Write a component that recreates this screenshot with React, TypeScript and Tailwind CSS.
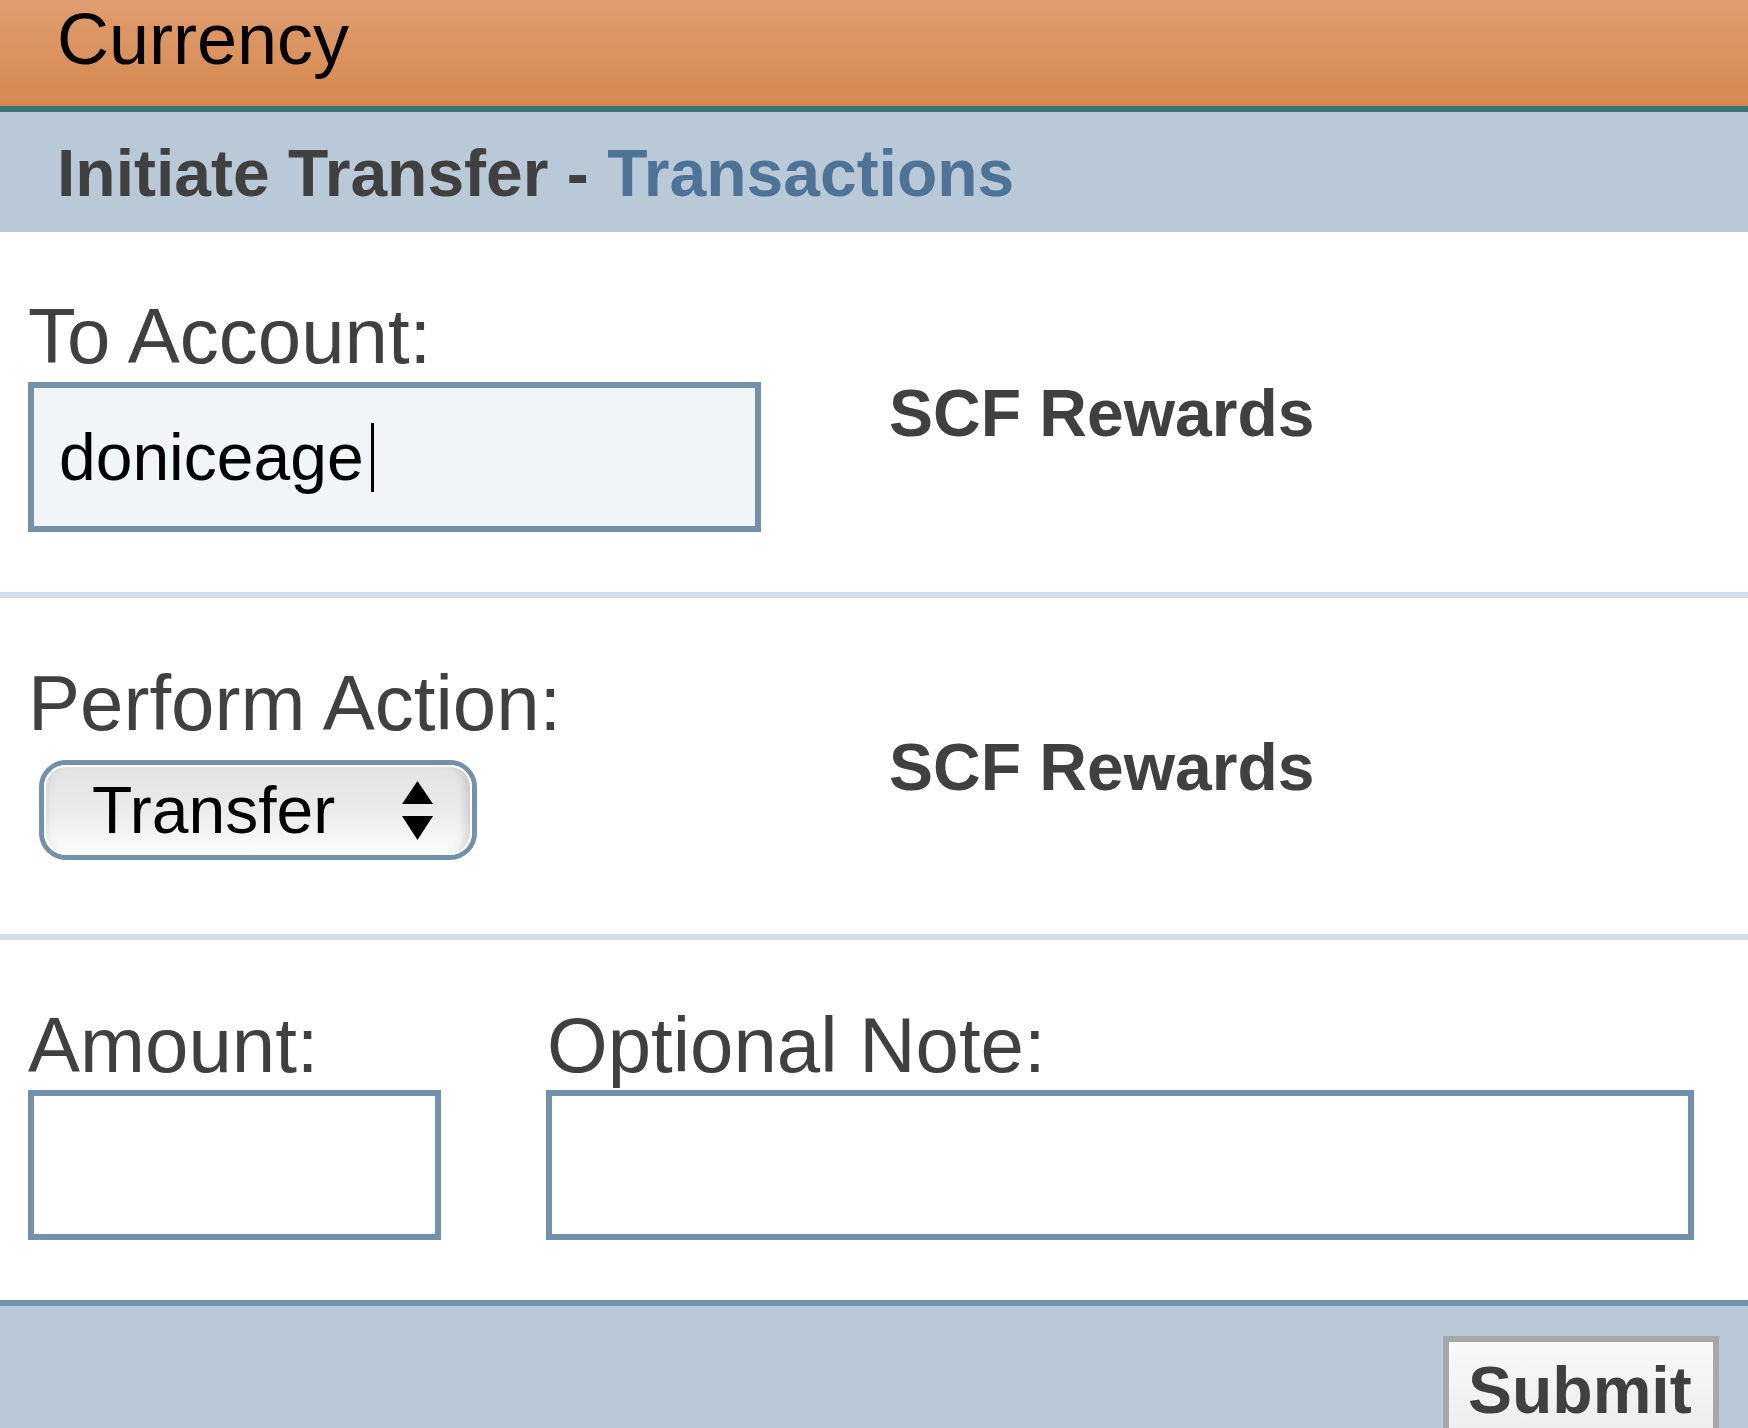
// Initiate Transfer form — currency panel
const FONT = "font-['Liberation_Sans',Arial,sans-serif]";

function FieldLabel({ children }: { children: React.ReactNode }) {
  return <div className="text-[78px] leading-[75px] text-[#404040]">{children}</div>;
}

function SideNote() {
  return <div className="text-[66px] leading-[66px] font-bold text-[#404040]">SCF Rewards</div>;
}

function Divider() {
  return <div className="h-[6px] bg-[#d2dfea]" />;
}

function UpDownArrows() {
  return (
    <svg width="31" height="59" viewBox="0 0 31 59" aria-hidden>
      <polygon points="15.5,0 31,23 0,23" fill="#000" />
      <polygon points="0,35 31,35 15.5,59" fill="#000" />
    </svg>
  );
}

export default function App() {
  return (
    <div className={`${FONT} w-full min-h-[1428px] bg-white overflow-hidden`}>
      {/* top bar */}
      <header className="h-[106px] bg-linear-to-b from-[#df9d6f] to-[#d6884f] pl-[57px] pt-[3px]">
        <h1 className="text-[72px] leading-[72px] text-black">Currency</h1>
      </header>
      <div className="h-[6px] bg-[#3a7373]" />

      <div className="h-[120px] bg-[#b9c9d8] pl-[57px] pt-[28px]">
        <h2 className="text-[66px] leading-[66px] font-bold text-[#404040]">
          Initiate Transfer - <span className="text-[#4e7396]">Transactions</span>
        </h2>
      </div>

      {/* to account */}
      <section className="flex pt-[67px] pb-[60px]">
        <div className="w-[889px] pl-[28px]">
          <FieldLabel>To Account:</FieldLabel>
          <div className="mt-[8px] w-[733px] h-[150px] border-[6px] border-[#7391aa] bg-[#f1f5f8] flex items-center pl-[25px]">
            <span className="text-[66px] leading-[66px] text-black">doniceage</span>
            <span className="ml-[7px] w-[3px] h-[69px] bg-black" />
          </div>
        </div>
        <div className="mt-[81px]">
          <SideNote />
        </div>
      </section>

      <Divider />

      {/* action */}
      <section className="flex pt-[68px] pb-[74px]">
        <div className="w-[889px] pl-[28px]">
          <FieldLabel>Perform Action:</FieldLabel>
          <div className="mt-[19px] ml-[11px] w-[438px] h-[100px] rounded-[27px] border-[5px] border-[#7391aa] bg-white">
            <div className="h-full rounded-[22px] border-[2px] border-white bg-linear-to-b from-[#e3e3e3] via-[#ebebeb] to-[#fcfcfc] shadow-[inset_-10px_0_10px_-6px_rgba(0,0,0,0.14),inset_8px_0_8px_-6px_rgba(0,0,0,0.08)] flex items-center pl-[46px] pr-[37px]">
              <span className="text-[66px] leading-[66px] text-black">Transfer</span>
              <span className="ml-auto flex">
                <UpDownArrows />
              </span>
            </div>
          </div>
        </div>
        <div className="mt-[68px]">
          <SideNote />
        </div>
      </section>

      <Divider />

      {/* amount + note */}
      <section className="flex pt-[68px] pb-[60px] pl-[28px]">
        <div className="w-[413px]">
          <FieldLabel>Amount:</FieldLabel>
          <div className="mt-[7px] h-[150px] border-[6px] border-[#7391aa] bg-white" />
        </div>
        <div className="ml-[105px] w-[1148px]">
          <FieldLabel>
            <span className="pl-[1px]">Optional Note:</span>
          </FieldLabel>
          <div className="mt-[7px] h-[150px] border-[6px] border-[#7391aa] bg-white" />
        </div>
      </section>

      {/* footer */}
      <footer className="h-[128px] overflow-hidden border-t-[6px] border-[#7391aa] bg-[#b9c9d8] flex justify-end items-start pt-[30px] pr-[29px]">
        <button className="w-[276px] border-[6px] border-[#a7a7a7] bg-linear-to-b from-[#f9f9f9] to-[#e9e9e9] pt-[15px] pb-[40px] pl-[19px] text-left">
          <span className="block text-[66px] leading-[66px] font-bold text-[#404040]">Submit</span>
        </button>
      </footer>
    </div>
  );
}
